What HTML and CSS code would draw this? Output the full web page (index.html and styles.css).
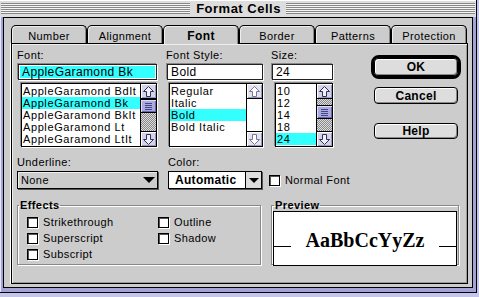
FILE: index.html
```html
<!DOCTYPE html>
<html lang="en">
<head>
    <meta charset="UTF-8">
    <title>Format Cells</title>
    <link rel="stylesheet" href="styles.css">
</head>
<body>
    <div class="window">
        <div class="win-inner">
            <!-- Titelleiste -->
            <div class="titlebar">
                <div class="stripes"></div>
                <div class="title">Format Cells</div>
                <div class="stripes"></div>
            </div>

            <div class="frame">
                <div class="content">
                    <!-- Reiter -->
                    <div class="tabs">
                        <div class="tab">Number</div>
                        <div class="tab">Alignment</div>
                        <div class="tab active">Font</div>
                        <div class="tab">Border</div>
                        <div class="tab">Patterns</div>
                        <div class="tab">Protection</div>
                    </div>

                    <div class="panel">
                        <div class="top-row">
                            <div class="col col-font">
                                <div class="label">Font:</div>
                                <div class="field"><span class="sel-text">AppleGaramond Bk</span></div>
                                <div class="list list-font">
                                    <ul class="items">
                                        <li>AppleGaramond BdIt</li>
                                        <li class="selected">AppleGaramond Bk</li>
                                        <li>AppleGaramond BkIt</li>
                                        <li>AppleGaramond Lt</li>
                                        <li>AppleGaramond LtIt</li>
                                    </ul>
                                    <div class="scrollbar">
                                        <div class="arrow up"><svg width="13" height="13" viewBox="0 0 13 13"><polygon points="6.5,1.5 11.5,6.5 8.5,6.5 8.5,11.5 4.5,11.5 4.5,6.5 1.5,6.5" /></svg></div>
                                        <div class="thumb"><span></span><span></span><span></span><span></span></div>
                                        <div class="track"></div>
                                        <div class="arrow down"><svg width="13" height="13" viewBox="0 0 13 13"><polygon points="6.5,11.5 11.5,6.5 8.5,6.5 8.5,1.5 4.5,1.5 4.5,6.5 1.5,6.5" /></svg></div>
                                    </div>
                                </div>
                            </div>

                            <div class="col col-style">
                                <div class="label">Font Style:</div>
                                <div class="field">Bold</div>
                                <div class="list list-style">
                                    <ul class="items">
                                        <li>Regular</li>
                                        <li>Italic</li>
                                        <li class="selected">Bold</li>
                                        <li>Bold Italic</li>
                                        <li></li>
                                    </ul>
                                    <div class="scrollbar disabled">
                                        <div class="arrow up"><svg width="13" height="13" viewBox="0 0 13 13"><polygon points="6.5,1.5 11.5,6.5 8.5,6.5 8.5,11.5 4.5,11.5 4.5,6.5 1.5,6.5" /></svg></div>
                                        <div class="track"></div>
                                        <div class="arrow down"><svg width="13" height="13" viewBox="0 0 13 13"><polygon points="6.5,11.5 11.5,6.5 8.5,6.5 8.5,1.5 4.5,1.5 4.5,6.5 1.5,6.5" /></svg></div>
                                    </div>
                                </div>
                            </div>

                            <div class="col col-size">
                                <div class="label">Size:</div>
                                <div class="field">24</div>
                                <div class="list list-size">
                                    <ul class="items">
                                        <li>10</li>
                                        <li>12</li>
                                        <li>14</li>
                                        <li>18</li>
                                        <li class="selected">24</li>
                                    </ul>
                                    <div class="scrollbar">
                                        <div class="arrow up"><svg width="13" height="13" viewBox="0 0 13 13"><polygon points="6.5,1.5 11.5,6.5 8.5,6.5 8.5,11.5 4.5,11.5 4.5,6.5 1.5,6.5" /></svg></div>
                                        <div class="track short"></div>
                                        <div class="thumb"><span></span><span></span><span></span><span></span></div>
                                        <div class="track"></div>
                                        <div class="arrow down"><svg width="13" height="13" viewBox="0 0 13 13"><polygon points="6.5,11.5 11.5,6.5 8.5,6.5 8.5,1.5 4.5,1.5 4.5,6.5 1.5,6.5" /></svg></div>
                                    </div>
                                </div>
                            </div>

                            <!-- Knöpfe -->
                            <div class="buttons">
                                <div class="default-ring"><button class="btn btn-ok">OK</button></div>
                                <button class="btn btn-cancel">Cancel</button>
                                <button class="btn btn-help">Help</button>
                            </div>
                        </div>

                        <div class="mid-row">
                            <div class="pop-group under">
                                <div class="label">Underline:</div>
                                <div class="popup popup-under">
                                    <span>None</span>
                                    <span class="tri"></span>
                                </div>
                            </div>
                            <div class="pop-group color">
                                <div class="label">Color:</div>
                                <div class="popup popup-color">
                                    <span class="color-name">Automatic</span>
                                    <span class="tri-box"><span class="tri"></span></span>
                                </div>
                            </div>
                            <label class="check normal-font"><span class="box"></span>Normal Font</label>
                        </div>

                        <div class="bottom-row">
                            <fieldset class="group effects">
                                <legend>Effects</legend>
                                <div class="effects-grid">
                                    <label class="check"><span class="box"></span>Strikethrough</label>
                                    <label class="check"><span class="box"></span>Outline</label>
                                    <label class="check"><span class="box"></span>Superscript</label>
                                    <label class="check"><span class="box"></span>Shadow</label>
                                    <label class="check"><span class="box"></span>Subscript</label>
                                </div>
                            </fieldset>
                            <fieldset class="group preview">
                                <legend>Preview</legend>
                                <div class="preview-box">
                                    <span class="rule"></span>
                                    <span class="sample">AaBbCcYyZz</span>
                                    <span class="rule"></span>
                                </div>
                            </fieldset>
                        </div>
                    </div>
                </div>
            </div>
        </div>
    </div>
</body>
</html>
```

FILE: styles.css
```css
/* Grunddesign */
body {
    margin: 0;
    padding: 0;
    background-color: #cccccc;
    font-family: "Liberation Sans", Arial, sans-serif;
    font-size: 11px;
    letter-spacing: 0.4px;
    color: #000;
}

.window {
    width: 479px;
    height: 297px;
    background-color: #c4c4ec;
}

.win-inner {
    width: 477px;
    height: 293px;
    box-sizing: border-box;
    border-right: 1px solid #000;
    border-bottom: 1px solid #000;
    display: flex;
    flex-direction: column;
    background-color: #a3a3d6;
}

/* Titelleiste */
.titlebar {
    height: 17px;
    flex: none;
    display: flex;
    background-color: #dddddd;
    border-top: 1px solid #ffffff;
    box-sizing: border-box;
    padding: 0 1px 0 1px;
}

.stripes {
    flex: 1;
    height: 11px;
    margin-top: 2px;
    background: repeating-linear-gradient(to bottom, #888888 0 1px, #f4f4f4 1px 2px);
}

.title {
    padding: 0 5px 0 6px;
    font-weight: bold;
    font-size: 13px;
    letter-spacing: 0.5px;
    line-height: 15px;
}

/* Fensterrahmen */
.frame {
    flex: 1;
    display: flex;
    padding: 0 4px 4px 3px;
    box-shadow: inset 1px 0 0 #e6e6ff;
}

.content {
    flex: 1;
    background-color: #cccccc;
    border: 1px solid #000;
    padding: 7px 4px 0 7px;
}

/* Reiter */
.tabs {
    display: flex;
    height: 18px;
    position: relative;
    z-index: 1;
}

.tab {
    width: 76px;
    box-sizing: border-box;
    border: 1px solid #000;
    border-bottom: none;
    border-radius: 5px 5px 0 0;
    background-color: #cccccc;
    box-shadow: inset 1px 1px 0 #eeeeee, inset -1px 0 0 #888888;
    text-align: center;
    padding-top: 2px;
    line-height: 16px;
    font-size: 11px;
}

.tab.active {
    font-weight: bold;
    font-size: 12px;
    height: 19px;
}

.panel {
    height: 241px;
    box-sizing: border-box;
    border: 1px solid #000;
    box-shadow: -1px 0 0 #ffffff, inset 1px 1px 0 #eeeeee, inset -1px -1px 0 #999999;
    padding: 5px 6px 0 6px;
}

.label {
    line-height: 12px;
    height: 12px;
    margin-left: -1px;
}

/* Obere Zeile */
.top-row {
    display: flex;
    height: 103px;
}

.col-font { width: 139px; }
.col-style { width: 96px; margin-left: 10px; }
.col-size { width: 61px; margin-left: 9px; }

.field {
    margin-top: 3px;
    height: 16px;
    box-sizing: border-box;
    border: 1px solid #222;
    box-shadow: 1px 1px 0 #ffffff, -1px -1px 0 #888888;
    background-color: #ffffff;
    padding: 0 3px;
    line-height: 14px;
    font-size: 12px;
}

.sel-text {
    display: block;
    background-color: #33ffff;
    margin: 1px -2px;
    padding: 0 2px;
    line-height: 12px;
}

.list {
    margin-top: 3px;
    height: 64px;
    box-sizing: border-box;
    display: flex;
    border: 1px solid #000;
    box-shadow: 1px 1px 0 #ffffff, -1px -1px 0 #888888;
    background-color: #ffffff;
}

.list-font { margin-left: 3px; }
.list-style { margin-left: 2px; }
.list-size { margin-left: 3px; }

.items {
    list-style: none;
    margin: 0;
    padding: 1px 0 0 0;
    flex: 1;
}

.items li {
    height: 12px;
    line-height: 12px;
    padding-left: 1px;
    font-size: 11px;
    letter-spacing: 0.6px;
    white-space: nowrap;
}

.items li.selected {
    background-color: #33ffff;
}

/* Rollbalken */
.scrollbar {
    width: 15px;
    border-left: 1px solid #000;
    display: flex;
    flex-direction: column;
}

.arrow {
    height: 15px;
    flex: none;
    box-sizing: border-box;
    background-color: #d4d4e6;
    display: flex;
    align-items: center;
    justify-content: center;
    box-shadow: inset 1px 1px 0 #ffffff, inset -1px -1px 0 #9999bb;
}

.arrow.up { border-bottom: 1px solid #000; }
.arrow.down { border-top: 1px solid #000; }

.arrow polygon {
    fill: #f0f0f8;
    stroke: #303060;
    stroke-width: 1;
}

.thumb {
    height: 14px;
    flex: none;
    box-sizing: border-box;
    border-top: 1px solid #000;
    border-bottom: 1px solid #000;
    background-color: #aaaadd;
    box-shadow: inset 1px 1px 0 #ddddff, inset -1px -1px 0 #6666aa;
    display: flex;
    flex-direction: column;
    align-items: center;
    justify-content: center;
    gap: 1px;
}

.thumb span {
    width: 7px;
    height: 1px;
    background-color: #444488;
}

.track {
    flex: 1;
    background: repeating-conic-gradient(#888888 0 25%, #dddddd 0 50%) 0 0 / 2px 2px;
}

.track.short {
    flex: none;
    height: 6px;
}

.scrollbar.disabled .track {
    background: #ffffff;
}

.scrollbar.disabled .arrow {
    background-color: #e4e4ee;
}

.scrollbar.disabled polygon {
    fill: #ffffff;
    stroke: #777799;
}

/* Knöpfe */
.buttons {
    margin-left: 38px;
    width: 90px;
    padding-top: 6px;
    display: flex;
    flex-direction: column;
    align-items: center;
}

.default-ring {
    width: 90px;
    height: 24px;
    box-sizing: border-box;
    border: 3px solid #000;
    border-radius: 8px;
}

.btn {
    display: block;
    width: 84px;
    box-sizing: border-box;
    border: 1px solid #000;
    border-radius: 4px;
    background-color: #dddddd;
    box-shadow: inset 1px 1px 0 #ffffff, inset -1px -1px 0 #888888;
    font-family: "Liberation Sans", Arial, sans-serif;
    font-weight: bold;
    font-size: 12px;
    letter-spacing: 0.3px;
    padding: 0;
    color: #000;
}

.btn-ok { height: 18px; }
.btn-cancel { height: 17px; margin-top: 8px; }
.btn-help { height: 16px; margin-top: 19px; }

/* Mittlere Zeile */
.mid-row {
    display: flex;
    align-items: flex-end;
    margin-top: 4px;
}

.pop-group .label { margin-bottom: 3px; margin-left: 0; }

.under { width: 141px; margin-left: -1px; }
.color { width: 94px; margin-left: 10px; }

.popup {
    height: 18px;
    box-sizing: border-box;
    border: 1px solid #000;
    box-shadow: 1px 1px 0 #555555;
    display: flex;
    align-items: center;
    justify-content: space-between;
    font-size: 11px;
}

.popup-under {
    background-color: #cccccc;
    padding: 0 2px 0 3px;
    box-shadow: 1px 1px 0 #555555, inset 1px 1px 0 #eeeeee;
}

.tri {
    width: 0;
    height: 0;
    border-left: 6px solid transparent;
    border-right: 6px solid transparent;
    border-top: 6px solid #000;
}

.popup-color {
    background-color: #ffffff;
    padding-left: 6px;
}

.color-name {
    font-weight: bold;
    font-size: 12px;
    letter-spacing: 0.3px;
}

.tri-box {
    width: 16px;
    height: 16px;
    box-sizing: border-box;
    border-left: 1px solid #000;
    background-color: #dddddd;
    display: flex;
    align-items: center;
    justify-content: center;
}

.tri-box .tri {
    border-left-width: 5px;
    border-right-width: 5px;
    border-top-width: 5px;
}

/* Kontrollkästchen */
.check {
    display: flex;
    align-items: center;
    height: 16px;
    font-size: 11px;
    white-space: nowrap;
}

.box {
    width: 11px;
    height: 11px;
    box-sizing: border-box;
    border: 1px solid #000;
    background-color: #ffffff;
    box-shadow: inset 1px 1px 0 #555555, 1px 1px 0 #ffffff;
    margin-right: 5px;
    flex: none;
}

.normal-font {
    margin-left: 7px;
    height: 18px;
}

/* Untere Zeile */
.bottom-row {
    display: flex;
    margin-top: 10px;
}

.group {
    margin: 0;
    padding: 0;
    border: 1px solid #888888;
    box-shadow: 1px 1px 0 #ffffff, inset 1px 1px 0 #ffffff;
    min-width: 0;
}

.group legend {
    padding: 0 1px;
    margin-left: 1px;
    font-weight: bold;
    font-size: 11px;
    line-height: 12px;
}

.effects {
    width: 244px;
    height: 66px;
    box-sizing: border-box;
    margin-left: -1px;
    padding: 3px 0 0 9px;
}

.effects legend {
    margin-left: -8px;
}

.effects-grid {
    display: grid;
    grid-template-columns: 131px 1fr;
}

.preview {
    width: 188px;
    height: 66px;
    box-sizing: border-box;
    margin-left: 10px;
    padding: 0 1px 1px 1px;
}

.preview-box {
    height: 55px;
    box-sizing: border-box;
    border: 1px solid #000;
    background-color: #ffffff;
    display: flex;
    align-items: baseline;
    justify-content: space-between;
    padding-top: 17px;
}

.rule {
    display: inline-block;
    width: 17px;
    height: 1px;
    background-color: #000;
}

.sample {
    font-family: "Liberation Serif", "Times New Roman", serif;
    font-weight: bold;
    font-size: 20px;
    line-height: 22px;
    letter-spacing: 0;
}
```
